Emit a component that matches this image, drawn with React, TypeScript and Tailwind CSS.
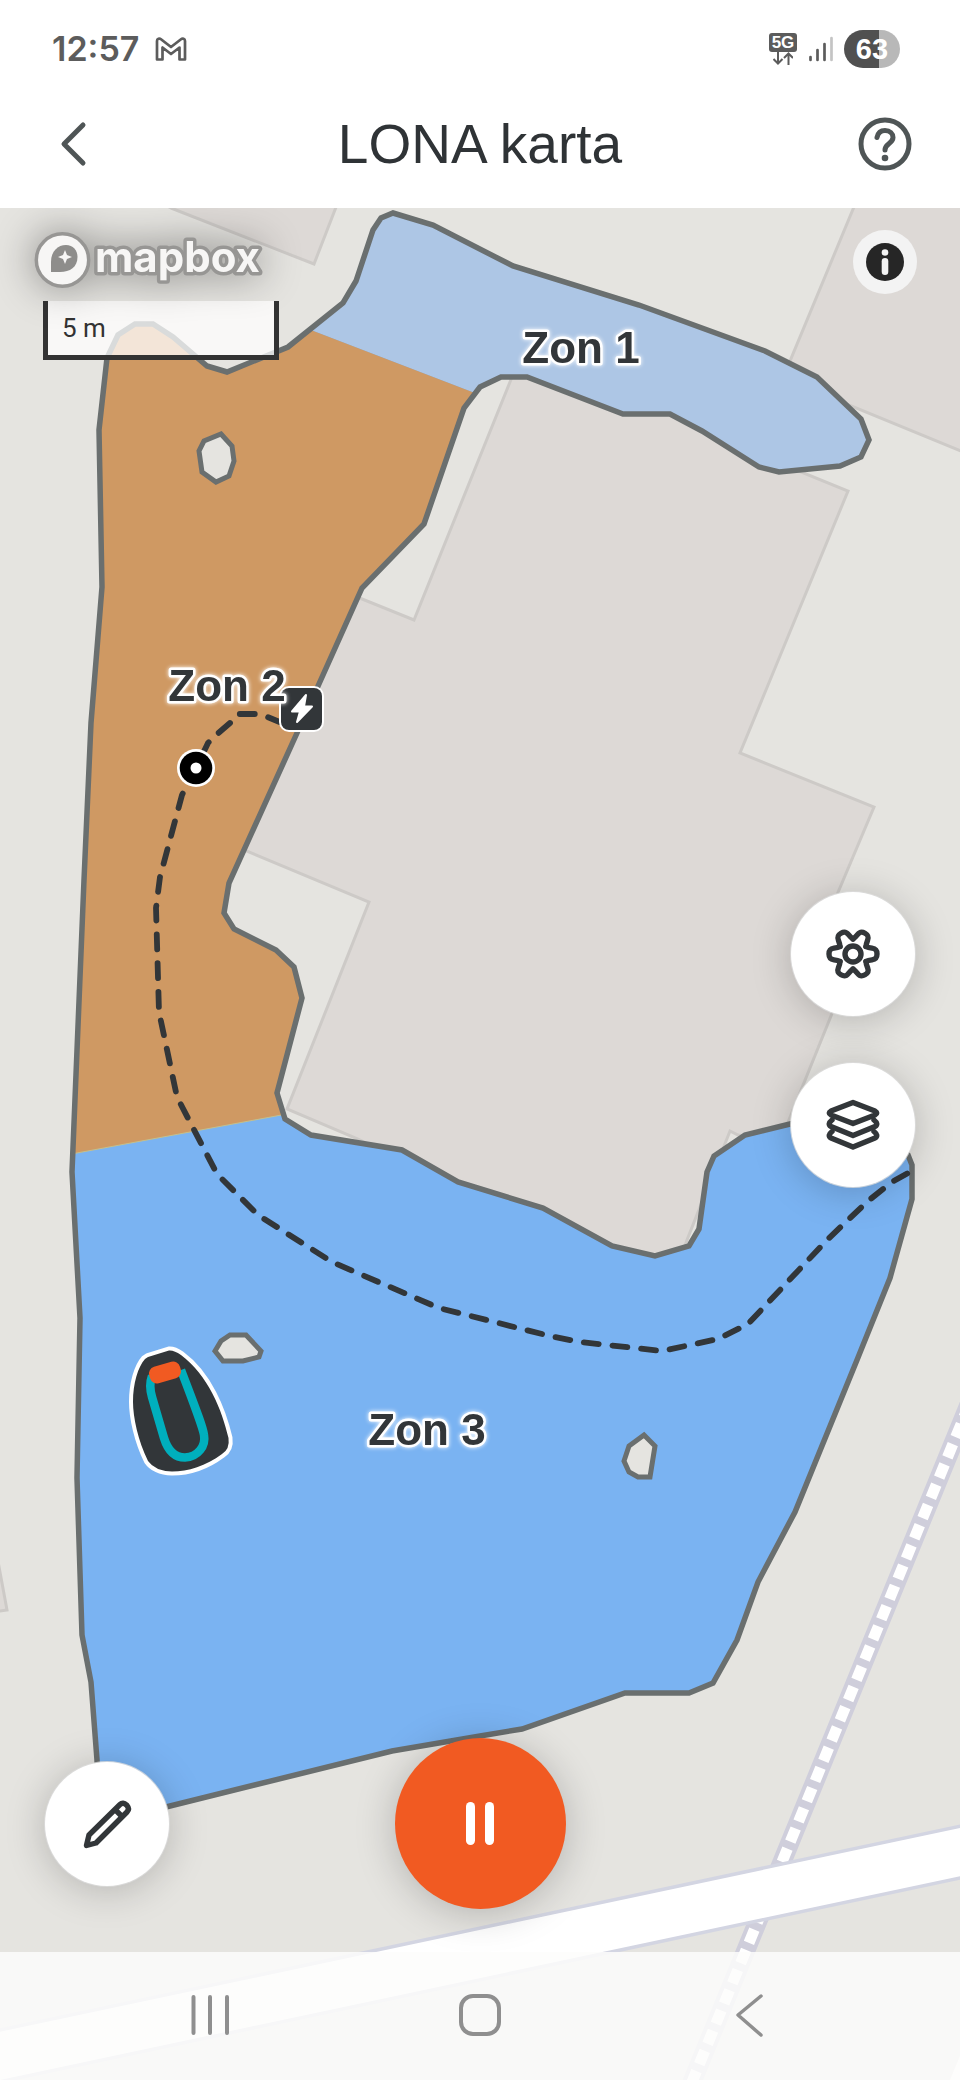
import type { ReactNode } from "react";

const BOUNDARY =
  "M393 213L433 225L513 266L639 305L765 351L817 377L861 419L869 440L861 457L840 466L779 472L759 467L702 431L670 414L623 414L527 377L501 377L480 387L464 408L424 524L362 588L297 733L229 883L224 913L234 929L276 950L294 967L302 998L277 1093L285 1119L311 1135L402 1150L458 1182L543 1208L612 1246L655 1256L689 1246L699 1229L707 1172L714 1156L745 1135L790 1124L853 1110L908 1155L912 1165L912 1199L890 1278L857 1360L795 1512L758 1582L737 1640L713 1683L689 1693L625 1693L522 1729L480 1736L392 1751L170 1806L100 1824L97 1760L91 1682L82 1635L77 1478L80 1318L72 1172L84 880L91 723L102 587L99 430L107 358L118 335L135 324L153 324L173 337L207 366L227 372L288 347L343 303L356 281L373 230L381 218Z";

const ROUTE =
  "M282 723L265 716L255 714L238 714L230 723L215 736L208 743L196 768L182 795L160 877L156 908L159 1012L177 1097L217 1174L258 1215L332 1262L439 1308L550 1336L580 1342L662 1351L718 1339L748 1324L827 1240L868 1201L892 1182L908 1173";

const buildings = [
  "171,208 314,264 338,202 160,202",
  "856,202 783,378 966,453 966,202",
  "-6,1540 7,1610 -6,1612",
  "512,377 414,620 330,586 220,840 369,902 287,1109 358,1139 670,1290 687,1240 730,1131 738,1135 780,1142 831,1016 855,955 820,935 874,807 740,753 848,491 779,463 700,380",
];

const obstacles = [
  "221,434 232,446 234,461 229,476 216,482 202,472 199,451 204,441",
  "230,1335 246,1335 261,1351 259,1357 243,1361 223,1361 215,1351 221,1341",
  "644,1435 655,1446 650,1477 638,1477 629,1472 624,1461 629,1446",
];

const zones = [
  { name: "Zon 1", x: 581, y: 363 },
  { name: "Zon 2", x: 227, y: 701 },
  { name: "Zon 3", x: 427, y: 1445 },
];

function ZoneMap() {
  return (
    <svg
      viewBox="0 208 960 1872"
      preserveAspectRatio="xMidYMin slice"
      className="absolute inset-0 h-full w-full"
      role="img"
      aria-label="Karta"
    >
      <defs>
        <clipPath id="lawn">
          <path d={BOUNDARY} />
        </clipPath>
      </defs>

      {buildings.map((points) => (
        <polygon
          key={points}
          points={points}
          fill="#ddd9d6"
          stroke="#cdcac7"
          strokeWidth="3"
        />
      ))}

      {/* footpath and road */}
      <path d="M975 1390L690 2087" stroke="#cfcedb" strokeWidth="19" />
      <path
        d="M975 1390L690 2087"
        stroke="#fff"
        strokeWidth="11"
        strokeDasharray="14.3 7.55"
        strokeDashoffset="7"
      />
      <path d="M-10 2058L970 1850" stroke="#d3d5e2" strokeWidth="54" />
      <path d="M-10 2058L970 1850" stroke="#fff" strokeWidth="47" />
      <polygon points="950,2080 960,2056 960,2080" fill="#fff" />

      {/* zones */}
      <g clipPath="url(#lawn)">
        <rect x="0" y="208" width="960" height="1700" fill="#7ab3f2" />
        <polygon
          points="290,200 290,322 480,395 560,520 900,520 900,200"
          fill="#adc6e5"
        />
        <polygon
          points="50,230 290,322 480,395 330,1106 50,1158"
          fill="#cf9963"
        />
        <path d="M50 1158L330 1106" stroke="#c3c08e" strokeWidth="1" />
      </g>
      <path d={BOUNDARY} fill="none" stroke="#6a6f6f" strokeWidth="5.5" />
      {obstacles.map((points) => (
        <polygon
          key={points}
          points={points}
          fill="#e5e4e0"
          stroke="#6a6f6f"
          strokeWidth="5"
        />
      ))}

      <path
        d={ROUTE}
        fill="none"
        stroke="#323639"
        strokeWidth="5.8"
        strokeLinecap="round"
        strokeLinejoin="round"
        strokeDasharray="15 13.8"
      />
      <circle cx="196" cy="768" r="19" fill="#fff" />
      <circle cx="196" cy="768" r="16.3" fill="#000" />
      <circle cx="196" cy="768" r="5.5" fill="#fff" />

      {/* charging station */}
      <rect x="279" y="686" width="45" height="46" rx="10" fill="#fff" />
      <rect x="281" y="688" width="41" height="42" rx="8" fill="#323639" />
      <path
        d="M306 695L292 711.500H300L297 722L312 706.500H304L306 695Z"
        fill="#fff"
        stroke="#fff"
        strokeWidth="2"
        strokeLinejoin="round"
      />

      {zones.map((zone) => (
        <text
          key={zone.name}
          x={zone.x}
          y={zone.y}
          textAnchor="middle"
          fill="#323639"
          stroke="#fff"
          strokeWidth="5"
          strokeLinejoin="round"
          className="text-[44px] font-bold [paint-order:stroke] drop-shadow-[0_0_2px_#fff]"
        >
          {zone.name}
        </text>
      ))}

      {/* mower */}
      <path
        d="M148 1357L169 1350.500Q174 1350 181 1355C208 1375 222 1410 228.500 1438Q230 1449 222 1454C206 1466 188 1471.500 172 1471.500Q155 1471 148 1461C138 1441 133 1417 133 1402C133 1383 138 1367 145 1359Z"
        fill="#323639"
        stroke="#fff"
        strokeWidth="8"
        strokeLinejoin="round"
        className="[paint-order:stroke]"
      />
      <path
        d="M152 1376C149 1384 150 1390 152 1397L164 1438C168 1451 175 1457.500 185 1457.500C198 1457 206 1446 204 1435C203 1428 199 1417 181 1370"
        fill="none"
        stroke="#00afbd"
        strokeWidth="8.500"
      />
      <rect
        x="149"
        y="1364"
        width="32"
        height="17"
        rx="7"
        fill="#f15a22"
        transform="rotate(-16 165 1372.500)"
      />
    </svg>
  );
}

function MapboxLogo() {
  return (
    <svg
      viewBox="43 230 228 60"
      className="h-[60px] w-[228px] overflow-visible drop-shadow-[0_0_20px_rgba(0,0,0,0.4)]"
      role="img"
      aria-label="mapbox"
    >
      <circle cx="62.500" cy="260" r="26.200" fill="#f7f6f5" stroke="#979694" strokeWidth="3.500" />
      <path
        d="M51 272V262C51 251 58 245 66 245C73 245 77.500 250 77.500 257C77.500 267 70 272 60 272Z"
        fill="#8e8d8b"
      />
      <path
        d="M65 250L67 255L72 257L67 259L65 264L63 259L58 257L63 255Z"
        fill="#f7f6f5"
      />
      <text
        x="95"
        y="272"
        fill="#f7f6f5"
        stroke="#979694"
        strokeWidth="7"
        strokeLinejoin="round"
        className="font-[Inter] text-[42px] font-bold [paint-order:stroke]"
      >
        mapbox
      </text>
    </svg>
  );
}

function StatusBar() {
  return (
    <div className="flex h-20 items-center justify-between pt-[18px] pr-[60px] pl-[52px] text-[#5c5c5c]">
      <div className="flex items-center gap-4">
        <span className="font-[Inter] text-[34px] leading-10 font-semibold">
          12:57
        </span>
        <svg
          viewBox="0 0 32 24"
          className="h-6 w-8"
          fill="none"
          stroke="currentColor"
          strokeWidth="2.700"
          strokeLinejoin="round"
        >
          <path d="M2 22.500V4C2 1.500 4.500 1 6 2.200L16 10L26 2.200C27.500 1 30 1.500 30 4V22.500H24.500V10.500L16 17L7.500 10.500V22.500Z" />
        </svg>
      </div>
      <div className="flex items-center">
        <div className="flex w-7 flex-col items-center">
          <span className="flex h-[19px] w-7 items-center justify-center rounded-[3px] bg-[#5c5c5c] text-[17px] leading-none font-bold text-white">
            5G
          </span>
          <svg
            viewBox="0 0 20 13"
            className="h-[13px] w-5"
            fill="none"
            stroke="currentColor"
            strokeWidth="2"
          >
            <path d="M5 0V11M0.500 7L5 11.500L9.500 7M15.500 13V2M11 6L15.500 1.500L20 6" />
          </svg>
        </div>
        <svg
          viewBox="0 0 24 26"
          className="ml-3 h-[26px] w-6"
          stroke="currentColor"
          strokeWidth="2.700"
          strokeLinecap="round"
        >
          <path d="M1.500 21V24M8.500 14V24M15.500 8V24" />
          <path d="M22.500 2V24" stroke="#c4c4c4" />
        </svg>
        <span className="ml-[11px] flex h-[38px] w-14 items-center justify-center rounded-full bg-linear-to-r from-[#505050] from-63% to-[#b8b8b8] to-63% text-[29px] leading-none font-bold text-white">
          63
        </span>
      </div>
    </div>
  );
}

function RoundButton({
  label,
  children,
}: {
  label: string;
  children: ReactNode;
}) {
  return (
    <button
      aria-label={label}
      className="flex size-[124px] items-center justify-center rounded-full bg-white text-[#323639] shadow-[0_0_0_1px_rgba(220,220,220,0.8),0_4px_40px_rgba(0,0,0,0.22)]"
    >
      <svg
        viewBox="-30 -30 60 60"
        className="size-[60px]"
        fill="none"
        stroke="currentColor"
        strokeWidth="5.4"
        strokeLinecap="round"
        strokeLinejoin="round"
      >
        {children}
      </svg>
    </button>
  );
}

export default function App() {
  return (
    <div className="flex min-h-screen flex-col bg-white font-['Liberation_Sans',sans-serif]">
      <header>
        <StatusBar />
        <div className="flex h-32 items-center justify-between pr-[48px] pl-[46px]">
          <button
            aria-label="Tillbaka"
            className="flex size-14 items-center justify-center text-[#4f5556]"
          >
            <svg
              viewBox="0 0 56 56"
              className="size-14"
              fill="none"
              stroke="currentColor"
              strokeWidth="5"
              strokeLinecap="round"
              strokeLinejoin="round"
            >
              <path d="M37 9L18 28L37 47" />
            </svg>
          </button>
          <h1 className="text-[55px] leading-[62px] text-[#2f3336]">
            LONA karta
          </h1>
          <button aria-label="Hjälp" className="size-[54px] text-[#4f5556]">
            <svg
              viewBox="0 0 54 54"
              className="size-[54px]"
              fill="none"
              stroke="currentColor"
              strokeWidth="5"
              strokeLinecap="round"
              strokeLinejoin="round"
            >
              <circle cx="27" cy="27" r="24" />
              <path d="M19 20.500C20 15.500 23 13.500 27 13.500C32 13.500 35 16.500 35 20.500C35 26.500 27 26.500 27 33" />
              <circle cx="27" cy="41" r="3.300" fill="currentColor" stroke="none" />
            </svg>
          </button>
        </div>
      </header>

      <main className="relative flex flex-1 flex-col overflow-hidden bg-[#e5e4e0]">
        <ZoneMap />

        <div className="relative flex items-start justify-between pt-[22px] pr-[43px] pl-[43px]">
          <div>
            <MapboxLogo />
            <div className="mt-[11px] flex h-[59px] w-[236px] items-center border-x-5 border-b-5 border-[#333] bg-white/75 pl-[14px] font-[Roboto] text-[26px] leading-8 text-[#333]">
              5 m
            </div>
          </div>
          <button
            aria-label="Information"
            className="flex size-16 items-center justify-center rounded-full bg-[#f3f3f3]"
          >
            <svg viewBox="0 0 38 38" className="size-[38px]">
              <circle cx="19" cy="19" r="19" fill="#262626" />
              <circle cx="19" cy="9.500" r="3.300" fill="#f3f3f3" />
              <rect x="15.700" y="15" width="6.600" height="17" rx="3.300" fill="#f3f3f3" />
            </svg>
          </button>
        </div>

        <div className="relative mt-auto flex flex-col items-end gap-[47px] pr-[45px]">
          <RoundButton label="Inställningar">
            {[0, 60, 120, 180, 240, 300].map((angle) => (
              <path
                key={angle}
                d="M13 -7.500Q15 -6.400 19 -5.800C23 -5.200 24 -3.500 24 0C24 3.500 23 5.200 19 5.800Q15 6.400 13 7.500"
                transform={`rotate(${angle})`}
              />
            ))}
            <circle r="8" />
          </RoundButton>
          <RoundButton label="Lager">
            <path d="M0 -22.500L22 -14Q25.500 -12 22 -10L0 -1.500L-22 -10Q-25.500 -12 -22 -14Z" />
            <path d="M-21 -5Q-26 -1 -22 1.500L0 10.500L22 1.500Q26 -1 21 -5" />
            <path d="M-21 6.500Q-26 10.500 -22 13L0 22L22 13Q26 10.500 21 6.500" />
          </RoundButton>
        </div>

        <div className="relative mt-[551px] mb-[43px] grid grid-cols-3 items-center px-[45px]">
          <RoundButton label="Redigera">
            <path d="M-20.500 21.500L-18 11L13 -19.500Q16 -22.500 19.500 -19L20 -18.500Q23 -15 20 -12L-11 19Z" />
            <path d="M8.500 -14L14 -8.500" />
          </RoundButton>
          <button
            aria-label="Pausa"
            className="flex size-[171px] items-center justify-center gap-[10px] justify-self-center rounded-full bg-[#f15a22] shadow-[0_4px_40px_rgba(0,0,0,0.22)]"
          >
            <span className="h-[43px] w-[9px] rounded-full bg-white" />
            <span className="h-[43px] w-[9px] rounded-full bg-white" />
          </button>
        </div>

        <nav className="relative flex h-32 items-center justify-between bg-[#fdfdfc]/85 px-[166px] text-[#8f8f8f]">
          <button aria-label="Senaste" className="flex w-[88px] justify-center">
            <svg
              viewBox="0 0 40 44"
              className="h-11 w-10"
              stroke="currentColor"
              strokeWidth="4"
              strokeLinecap="round"
            >
              <path d="M3.500 3V39M20 3V39M37 3V39" />
            </svg>
          </button>
          <button aria-label="Hem" className="flex w-[88px] justify-center">
            <svg
              viewBox="0 0 44 44"
              className="size-11"
              fill="none"
              stroke="currentColor"
              strokeWidth="4"
            >
              <rect x="3" y="2" width="38" height="38" rx="12" />
            </svg>
          </button>
          <button aria-label="Bakåt" className="flex w-[88px] justify-center">
            <svg
              viewBox="0 0 44 44"
              className="size-11"
              fill="none"
              stroke="currentColor"
              strokeWidth="3.500"
              strokeLinecap="round"
              strokeLinejoin="round"
            >
              <path d="M33 2L10 21L33 41" />
            </svg>
          </button>
        </nav>
      </main>
    </div>
  );
}
